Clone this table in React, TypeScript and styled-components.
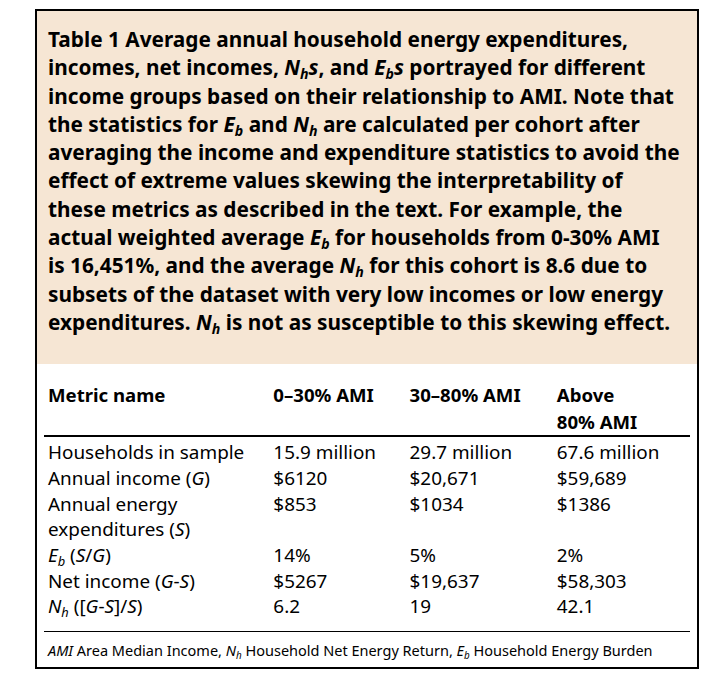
import React from "react";
import styled, { createGlobalStyle } from "styled-components";

const GlobalStyle = createGlobalStyle`
  html, body { margin: 0; padding: 0; background: #ffffff; }
  body { font-family: "Noto Sans", "DejaVu Sans", sans-serif; color: #000; }
`;

const Frame = styled.div`
  box-sizing: border-box;
  margin: 9px 0 0 35px;
  width: 664px;
  height: 660px;
  border: 2px solid #000;
  background: #fff;
  display: flex;
  flex-direction: column;
`;

const Caption = styled.div`
  background: #f6e6d4;
  padding: 14px 20px 28px 11px;
  font-weight: 700;
  font-size: 20.8px;
  line-height: 28.3px;
  letter-spacing: 0;
`;

const CaptionLine = styled.span`
  display: block;
  white-space: nowrap;
`;

const Var = styled.i`
  font-style: italic;
`;

const Sub = styled.sub`
  font-size: 0.68em;
  vertical-align: -0.28em;
  line-height: 0;
`;

const TableArea = styled.div`
  padding: 16px 7px 0 7px;
`;

const Table = styled.table`
  width: 100%;
  border-collapse: collapse;
  table-layout: fixed;
`;

const HeadCell = styled.th`
  text-align: left;
  vertical-align: top;
  padding: 1px 4px 0 4px;
  font-weight: 700;
  font-size: 18.6px;
  line-height: 27px;
  border-bottom: 2px solid #000;
  height: 54px;
  box-sizing: border-box;
`;

const Cell = styled.td<{ $first?: boolean; $last?: boolean }>`
  vertical-align: top;
  padding: ${(p) => (p.$first ? "3px" : "0")} 4px ${(p) => (p.$last ? "11px" : "0")} 4px;
  font-size: 18.9px;
  line-height: 25.7px;
  border-bottom: ${(p) => (p.$last ? "1.5px solid #000" : "none")};
`;

const Footnote = styled.div`
  margin: 0 7px;
  padding: 7px 4px 0 4px;
  font-size: 14.5px;
  line-height: 22px;
  white-space: nowrap;
`;

const widths = [225, 136, 147, 137];

type Row = { label: React.ReactNode; values: string[] };

const Nh = () => (
  <>
    <Var>N</Var>
    <Sub>
      <Var>h</Var>
    </Sub>
  </>
);
const Eb = () => (
  <>
    <Var>E</Var>
    <Sub>
      <Var>b</Var>
    </Sub>
  </>
);

const rows: Row[] = [
  { label: "Households in sample", values: ["15.9 million", "29.7 million", "67.6 million"] },
  {
    label: (
      <>
        Annual income (<Var>G</Var>)
      </>
    ),
    values: ["$6120", "$20,671", "$59,689"],
  },
  {
    label: (
      <>
        Annual energy expenditures (<Var>S</Var>)
      </>
    ),
    values: ["$853", "$1034", "$1386"],
  },
  {
    label: (
      <>
        <Eb /> (<Var>S</Var>/<Var>G</Var>)
      </>
    ),
    values: ["14%", "5%", "2%"],
  },
  {
    label: (
      <>
        Net income (<Var>G</Var>-<Var>S</Var>)
      </>
    ),
    values: ["$5267", "$19,637", "$58,303"],
  },
  {
    label: (
      <>
        <Nh /> ([<Var>G</Var>-<Var>S</Var>]/<Var>S</Var>)
      </>
    ),
    values: ["6.2", "19", "42.1"],
  },
];

export default function App() {
  return (
    <>
      <GlobalStyle />
      <Frame>
        <Caption>
          <CaptionLine>Table 1 Average annual household energy expenditures,</CaptionLine>
          <CaptionLine>
            incomes, net incomes, <Nh />
            <Var>s</Var>, and <Eb />
            <Var>s</Var> portrayed for different
          </CaptionLine>
          <CaptionLine>income groups based on their relationship to AMI. Note that</CaptionLine>
          <CaptionLine>
            the statistics for <Eb /> and <Nh /> are calculated per cohort after
          </CaptionLine>
          <CaptionLine>averaging the income and expenditure statistics to avoid the</CaptionLine>
          <CaptionLine>effect of extreme values skewing the interpretability of</CaptionLine>
          <CaptionLine>these metrics as described in the text. For example, the</CaptionLine>
          <CaptionLine>
            actual weighted average <Eb /> for households from 0-30% AMI
          </CaptionLine>
          <CaptionLine>
            is 16,451%, and the average <Nh /> for this cohort is 8.6 due to
          </CaptionLine>
          <CaptionLine>subsets of the dataset with very low incomes or low energy</CaptionLine>
          <CaptionLine>
            expenditures. <Nh /> is not as susceptible to this skewing effect.
          </CaptionLine>
        </Caption>
        <TableArea>
          <Table>
            <colgroup>
              {widths.map((w, i) => (
                <col key={i} style={{ width: w }} />
              ))}
            </colgroup>
            <thead>
              <tr>
                <HeadCell>Metric name</HeadCell>
                <HeadCell>0–30% AMI</HeadCell>
                <HeadCell>30–80% AMI</HeadCell>
                <HeadCell>
                  Above
                  <br />
                  80% AMI
                </HeadCell>
              </tr>
            </thead>
            <tbody>
              {rows.map((r, i) => {
                const first = i === 0;
                const last = i === rows.length - 1;
                return (
                  <tr key={i}>
                    <Cell $first={first} $last={last}>
                      {r.label}
                    </Cell>
                    {r.values.map((v, j) => (
                      <Cell key={j} $first={first} $last={last}>
                        {v}
                      </Cell>
                    ))}
                  </tr>
                );
              })}
            </tbody>
          </Table>
        </TableArea>
        <Footnote>
          <Var>AMI</Var> Area Median Income, <Nh /> Household Net Energy Return, <Eb /> Household Energy
          Burden
        </Footnote>
      </Frame>
    </>
  );
}
